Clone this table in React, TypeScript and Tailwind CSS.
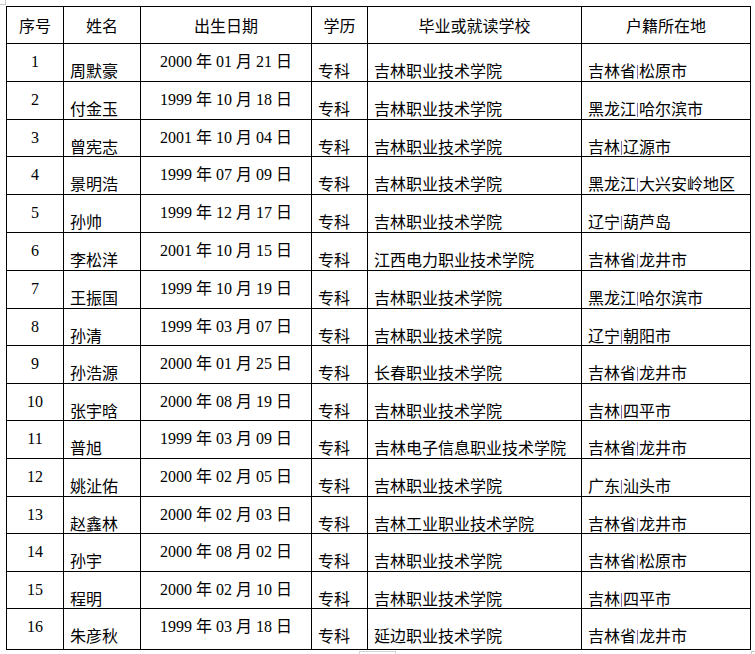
import React from "react";

type Row = {
  no: string;
  name: string;
  date: string;
  edu: string;
  school: string;
  prov: string;
  city: string;
  h: string;
};

const rows: Row[] = [
  { no: "1", name: "周默豪", date: "2000 年 01 月 21 日", edu: "专科", school: "吉林职业技术学院", prov: "吉林省", city: "松原市", h: "h-[38px]" },
  { no: "2", name: "付金玉", date: "1999 年 10 月 18 日", edu: "专科", school: "吉林职业技术学院", prov: "黑龙江", city: "哈尔滨市", h: "h-[38px]" },
  { no: "3", name: "曾宪志", date: "2001 年 10 月 04 日", edu: "专科", school: "吉林职业技术学院", prov: "吉林", city: "辽源市", h: "h-[37px]" },
  { no: "4", name: "景明浩", date: "1999 年 07 月 09 日", edu: "专科", school: "吉林职业技术学院", prov: "黑龙江", city: "大兴安岭地区", h: "h-[38px]" },
  { no: "5", name: "孙帅", date: "1999 年 12 月 17 日", edu: "专科", school: "吉林职业技术学院", prov: "辽宁", city: "葫芦岛", h: "h-[38px]" },
  { no: "6", name: "李松洋", date: "2001 年 10 月 15 日", edu: "专科", school: "江西电力职业技术学院", prov: "吉林省", city: "龙井市", h: "h-[38px]" },
  { no: "7", name: "王振国", date: "1999 年 10 月 19 日", edu: "专科", school: "吉林职业技术学院", prov: "黑龙江", city: "哈尔滨市", h: "h-[38px]" },
  { no: "8", name: "孙清", date: "1999 年 03 月 07 日", edu: "专科", school: "吉林职业技术学院", prov: "辽宁", city: "朝阳市", h: "h-[37px]" },
  { no: "9", name: "孙浩源", date: "2000 年 01 月 25 日", edu: "专科", school: "长春职业技术学院", prov: "吉林省", city: "龙井市", h: "h-[38px]" },
  { no: "10", name: "张宇晗", date: "2000 年 08 月 19 日", edu: "专科", school: "吉林职业技术学院", prov: "吉林", city: "四平市", h: "h-[37px]" },
  { no: "11", name: "普旭", date: "1999 年 03 月 09 日", edu: "专科", school: "吉林电子信息职业技术学院", prov: "吉林省", city: "龙井市", h: "h-[38px]" },
  { no: "12", name: "姚沚佑", date: "2000 年 02 月 05 日", edu: "专科", school: "吉林职业技术学院", prov: "广东", city: "汕头市", h: "h-[38px]" },
  { no: "13", name: "赵鑫林", date: "2000 年 02 月 03 日", edu: "专科", school: "吉林工业职业技术学院", prov: "吉林省", city: "龙井市", h: "h-[37px]" },
  { no: "14", name: "孙宇", date: "2000 年 08 月 02 日", edu: "专科", school: "吉林职业技术学院", prov: "吉林省", city: "松原市", h: "h-[38px]" },
  { no: "15", name: "程明", date: "2000 年 02 月 10 日", edu: "专科", school: "吉林职业技术学院", prov: "吉林", city: "四平市", h: "h-[37px]" },
  { no: "16", name: "朱彦秋", date: "1999 年 03 月 18 日", edu: "专科", school: "延边职业技术学院", prov: "吉林省", city: "龙井市", h: "h-[41px]" },
];

const headers = ["序号", "姓名", "出生日期", "学历", "毕业或就读学校", "户籍所在地"];

const cell = "border-r border-b border-black flex whitespace-nowrap";
const mid = "items-start justify-center pt-[10px] font-['Liberation_Serif','Noto_Sans_CJK_SC',serif]";
const low = "items-start pl-[6px] pt-[18px]";

export default function App() {
  return (
    <div className="relative w-[755px] h-[654px] bg-white overflow-hidden text-black text-[16px] leading-[16px] font-['Noto_Sans_CJK_SC',sans-serif]">
      {/* word page marks */}
      <div className="absolute left-0 top-0 w-[6px] h-[5px] border-r border-b border-[#c8c8c8]" />
      <div className="absolute left-[359px] top-[651px] w-[37px] h-[6px] border-l border-t border-r border-[#d4d4d4]" />
      <div className="absolute left-[751px] top-[651px] w-[6px] h-[6px] border-l border-t border-[#c8c8c8]" />

      <div className="pl-[6px] pt-[6px]">
        <div className="grid grid-cols-[57px_77px_171px_56px_214px_169px] w-[745px] border-l border-t border-black">
          {headers.map((h) => (
            <div key={h} className={`${cell} h-[37px] items-center justify-center`}>
              {h}
            </div>
          ))}
          {rows.map((r) => (
            <React.Fragment key={r.no}>
              <div className={`${cell} ${r.h} ${mid}`}>{r.no}</div>
              <div className={`${cell} ${r.h} ${low}`}>{r.name}</div>
              <div className={`${cell} ${r.h} ${mid}`}>{r.date}</div>
              <div className={`${cell} ${r.h} ${low}`}>{r.edu}</div>
              <div className={`${cell} ${r.h} ${low}`}>{r.school}</div>
              <div className={`${cell} ${r.h} ${low}`}>
                <span>
                  {r.prov}
                  <span className="inline-block w-px h-[14px] mx-px bg-[#8a6fb0] align-[-2px]" />
                  {r.city}
                </span>
              </div>
            </React.Fragment>
          ))}
        </div>
      </div>
    </div>
  );
}
